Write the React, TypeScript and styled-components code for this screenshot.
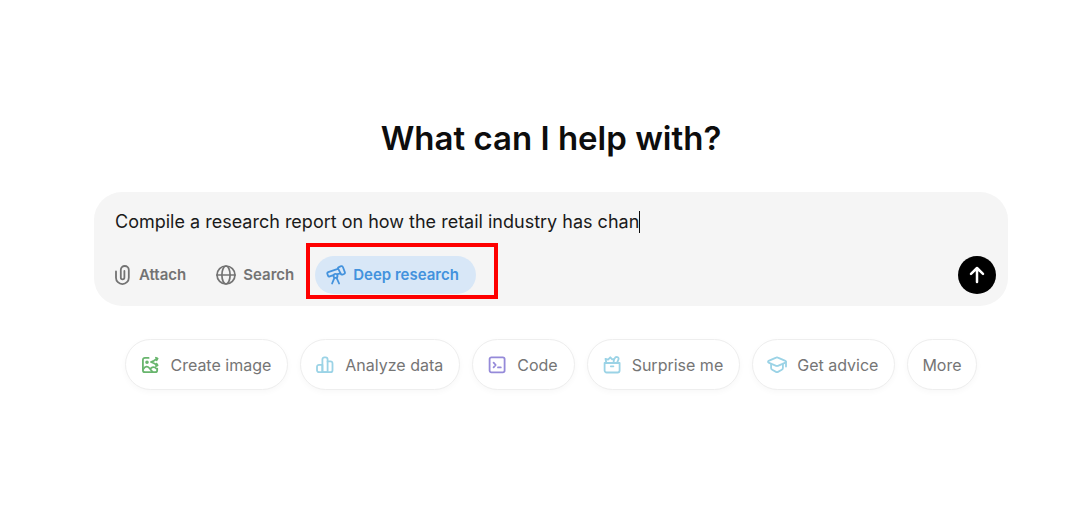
import React from "react";
import styled, { createGlobalStyle } from "styled-components";

const GlobalStyle = createGlobalStyle`
  * { box-sizing: border-box; }
  body {
    margin: 0;
    background: #ffffff;
    font-family: Inter, "Liberation Sans", sans-serif;
  }
  button, input { font-family: inherit; }
`;

const Page = styled.main`
  display: flex;
  flex-direction: column;
  padding: 116px 72px 32px 94px;
`;

const Title = styled.h1`
  margin: 0 0 32px;
  font-size: 33px;
  line-height: 44px;
  font-weight: 600;
  text-align: center;
  color: #0d0d0d;
`;

const Composer = styled.form`
  display: flex;
  flex-direction: column;
  gap: 20px;
  padding: 16px 12px 12px 21px;
  border-radius: 28px;
  background: #f5f5f5;
`;

const PromptRow = styled.div`
  display: flex;
  align-items: center;
  height: 28px;
`;

const PromptInput = styled.input`
  field-sizing: content;
  min-width: 0;
  padding: 0;
  border: 0;
  outline: 0;
  background: transparent;
  font-size: 18px;
  line-height: 28px;
  color: #1a1a1a;
`;

const Caret = styled.span`
  width: 1px;
  height: 22px;
  flex: none;
  background: #0d0d0d;
`;

const Toolbar = styled.div`
  display: flex;
  align-items: center;
`;

const ToolButton = styled.button<{ $active?: boolean }>`
  display: flex;
  align-items: center;
  gap: 7px;
  height: 38px;
  padding: ${(p) => (p.$active ? "0 17px 0 11px" : "0")};
  border: 0;
  border-radius: 19px;
  background: ${(p) => (p.$active ? "#d8e7f7" : "transparent")};
  color: ${(p) => (p.$active ? "#4392dd" : "#737373")};
  font-size: 15px;
  line-height: 20px;
  font-weight: 600;
  white-space: nowrap;
`;

const ToolGroup = styled.div`
  display: flex;
  gap: 30px;
  margin-right: 21px;
`;

const Highlighted = styled.div`
  position: relative;
`;

const HighlightFrame = styled.span`
  position: absolute;
  inset: -13px -22px -5px -9px;
  border: 4px solid #fe0000;
  pointer-events: none;
`;

const SendButton = styled.button`
  display: flex;
  align-items: center;
  justify-content: center;
  width: 38px;
  height: 38px;
  margin-left: auto;
  padding: 0;
  border: 0;
  border-radius: 50%;
  background: #000000;
  color: #ffffff;
`;

const Suggestions = styled.div`
  display: flex;
  flex-wrap: wrap;
  justify-content: center;
  gap: 12px;
  margin-top: 33px;
`;

const Chip = styled.button<{ $withIcon: boolean }>`
  display: flex;
  align-items: center;
  gap: 10px;
  height: 51px;
  padding: ${(p) => (p.$withIcon ? "0 16px 0 14px" : "0 14px")};
  border: 1px solid #eeeeee;
  border-radius: 26px;
  background: #ffffff;
  box-shadow: 0 2px 6px rgba(0, 0, 0, 0.03);
  color: #757575;
  font-size: 16px;
  line-height: 24px;
  white-space: nowrap;
`;

const Icon = styled.svg`
  display: block;
  flex: none;
  fill: none;
  stroke: currentColor;
  stroke-linecap: round;
  stroke-linejoin: round;
`;

const PaperclipIcon = () => (
  <Icon width="17" height="20" viewBox="0 0 17 20" strokeWidth="1.8">
    <path d="M1 6.5v6.2a6.3 6.3 0 0 0 12.8 0V5a4 4 0 0 0-8 0v7.6a1.8 1.8 0 0 0 3.6 0V6" />
  </Icon>
);

const GlobeIcon = () => (
  <Icon width="20" height="20" viewBox="0 0 20 20" strokeWidth="1.7">
    <circle cx="10" cy="10" r="9" />
    <ellipse cx="10" cy="10" rx="4.1" ry="9" />
    <path d="M1 10h18" />
  </Icon>
);

const TelescopeIcon = () => (
  <Icon width="20" height="20" viewBox="0 0 20 20" strokeWidth="1.8">
    <path d="M12.8 2.1l2.4-.9a1.3 1.3 0 0 1 1.7.8l2 5.4a1.3 1.3 0 0 1-.8 1.6l-1.7.6a1.3 1.3 0 0 1-1.6-.7l-2.6-5.3a1 1 0 0 1 .6-1.5z" />
    <path d="M11.9 3.8L2.2 7.2a1.4 1.4 0 0 0-.8 1.8l.6 1.6a1.4 1.4 0 0 0 1.8.8l3.7-1.3M14.5 8.3l-2.9.8" />
    <circle cx="9.5" cy="10.9" r="2" />
    <path d="M8.4 12.8l-2.3 5.7M10.6 12.8l2.5 5.7" />
  </Icon>
);

const ArrowUpIcon = () => (
  <Icon width="20" height="20" viewBox="0 0 20 20" strokeWidth="2.5">
    <path d="M10 17V3.2M4 8.8L10 3l6 5.8" />
  </Icon>
);

const ImageIcon = () => (
  <Icon width="20" height="20" viewBox="0 0 20 20" strokeWidth="1.8" color="#68b56d">
    <path d="M8.6 2.9H4.9a2 2 0 0 0-2 2v10.3a2 2 0 0 0 2 2h10.3a2 2 0 0 0 2-2v-1.6" />
    <path d="M3.2 14.2c2.3-3.2 4.4-3.2 6.3-.9l3 3.6M10.8 13.4c1.8-1.6 3.6-1.8 5.6.2" />
    <circle cx="7" cy="7.3" r=".9" />
    <path d="M17.4 3.6l-3.6 2.2-2.9 1.2 2.9 1.2 3.6 2" />
    <path d="M15.9 2.7l1.6.9-.9 1.6M16.6 8.6l.9 1.6-1.6.9" />
  </Icon>
);

const ChartIcon = () => (
  <Icon width="20" height="20" viewBox="0 0 20 20" strokeWidth="1.8" color="#9bd3e6">
    <path d="M7.4 17.2H4a2 2 0 0 1-2-2v-3.4a2 2 0 0 1 2-2h3.4z" />
    <path d="M7.4 17.2V4.4a2 2 0 0 1 2-2h1.2a2 2 0 0 1 2 2v12.8z" />
    <path d="M7.4 17.2h5.2M12.6 6.4h2.9a2 2 0 0 1 2 2v6.8a2 2 0 0 1-2 2h-2.9" />
  </Icon>
);

const TerminalIcon = () => (
  <Icon width="20" height="20" viewBox="0 0 20 20" strokeWidth="1.8" color="#958ad9">
    <rect x="2.6" y="2.3" width="15" height="15" rx="1.8" />
    <path d="M6.6 7.7L8.7 10l-2.1 2.3M11 12.4h2.8" />
  </Icon>
);

const GiftIcon = () => (
  <Icon width="20" height="20" viewBox="0 0 20 20" strokeWidth="1.8" color="#9bd3e6">
    <path d="M2.6 8h15v7.5a2 2 0 0 1-2 2h-11a2 2 0 0 1-2-2z" />
    <path d="M8.8 11.3h2.6M4.3 7.8L3.5 3.8l2.6.8L8.3 2.3l1.9 2.1 1.9-.2-.6 3.5" />
    <path d="M12.1 4.2l.9-1.3a1.4 1.4 0 0 1 2-.7 1.5 1.5 0 0 1 1.5 2.1L15 7.8" />
  </Icon>
);

const GraduationIcon = () => (
  <Icon width="20" height="20" viewBox="0 0 20 20" strokeWidth="1.8" color="#9bd3e6">
    <path d="M9.1 2.6L1.6 5.8a1 1 0 0 0 0 1.8l7.5 3.2a2 2 0 0 0 1.8 0l7.5-3.2a1 1 0 0 0 0-1.8l-7.5-3.2a2 2 0 0 0-1.8 0z" />
    <path d="M4.1 8.9v4a2 2 0 0 0 1.1 1.8L9 16.9a2 2 0 0 0 2 0l3.8-2.2a2 2 0 0 0 1.1-1.8v-4M19 7v4.6" />
  </Icon>
);

const suggestions: { label: string; icon?: React.ReactNode }[] = [
  { label: "Create image", icon: <ImageIcon /> },
  { label: "Analyze data", icon: <ChartIcon /> },
  { label: "Code", icon: <TerminalIcon /> },
  { label: "Surprise me", icon: <GiftIcon /> },
  { label: "Get advice", icon: <GraduationIcon /> },
  { label: "More" },
];

export default function App() {
  return (
    <>
      <GlobalStyle />
      <Page>
        <Title>What can I help with?</Title>
        <Composer onSubmit={(e) => e.preventDefault()}>
          <PromptRow>
            <PromptInput
              type="text"
              aria-label="Prompt"
              defaultValue="Compile a research report on how the retail industry has chan"
            />
            <Caret />
          </PromptRow>
          <Toolbar>
            <ToolGroup>
              <ToolButton type="button">
                <PaperclipIcon />
                Attach
              </ToolButton>
              <ToolButton type="button">
                <GlobeIcon />
                Search
              </ToolButton>
            </ToolGroup>
            <Highlighted>
              <ToolButton type="button" $active aria-pressed="true">
                <TelescopeIcon />
                Deep research
              </ToolButton>
              <HighlightFrame />
            </Highlighted>
            <SendButton type="submit" aria-label="Send prompt">
              <ArrowUpIcon />
            </SendButton>
          </Toolbar>
        </Composer>
        <Suggestions>
          {suggestions.map(({ label, icon }) => (
            <Chip type="button" key={label} $withIcon={Boolean(icon)}>
              {icon}
              {label}
            </Chip>
          ))}
        </Suggestions>
      </Page>
    </>
  );
}
